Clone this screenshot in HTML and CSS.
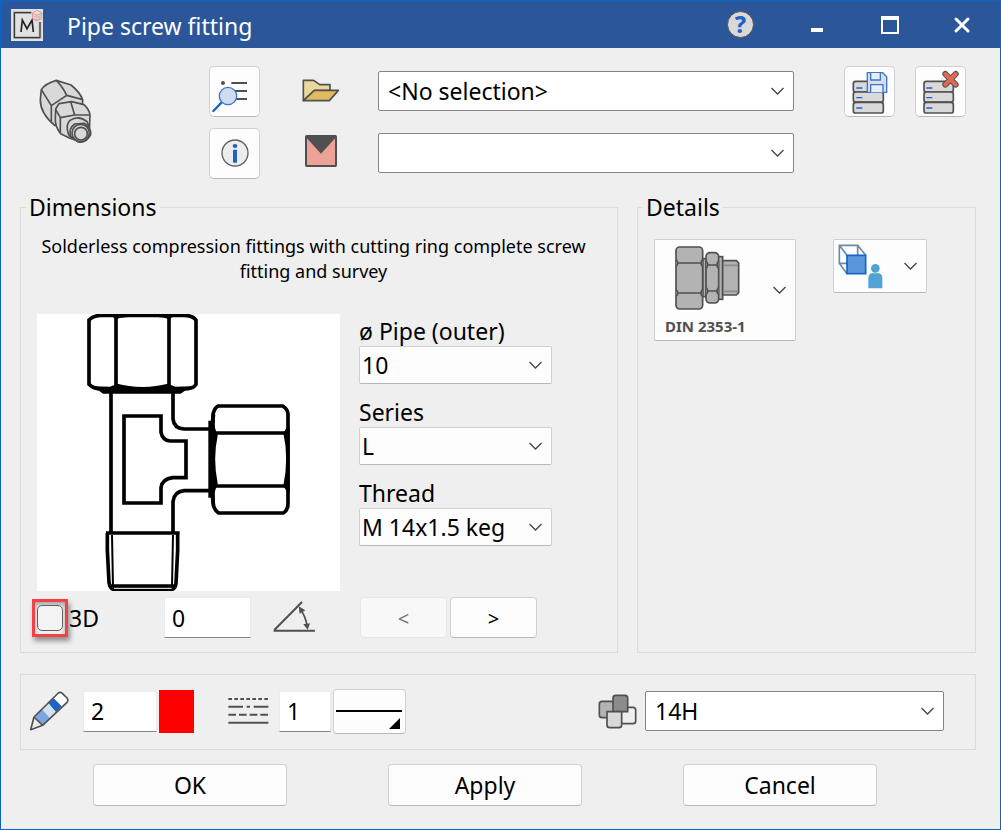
FILE: index.html
```html
<!DOCTYPE html>
<html lang="en">
<head>
    <meta charset="UTF-8">
    <meta name="viewport" content="width=device-width, initial-scale=1.0">
    <title>Pipe screw fitting</title>
    <link rel="stylesheet" href="styles.css">
</head>
<body>
    <div class="window">
        <header class="titlebar">
            <svg class="app-icon" width="32" height="32" viewBox="33 27 96 96">
                <rect x="33" y="27" width="96" height="96" fill="#e1e1e1"/>
                <path d="M94 38H43V113H120V66" fill="none" stroke="#b5b5b5" stroke-width="8"/>
                <path d="M94 38H43V113H120V66" fill="none" stroke="#222" stroke-width="3"/>
                <path d="M63 96L67 60L81 86L96 60L100 96" fill="none" stroke="#222" stroke-width="5"/>
                <path d="M97 39L111 31L125 38V56L111 63L98 57ZM98 40L111 46L125 39M101 48L111 52L122 47M101 56L111 59L122 53" fill="none" stroke="#e58b8b" stroke-width="2.5"/>
            </svg>
            <h1 class="title">Pipe screw fitting</h1>
            <div class="window-buttons">
                <button class="win-btn help" aria-label="Help">?</button>
                <button class="win-btn" aria-label="Minimize">
                    <svg width="20" height="20"><rect x="4" y="13" width="12" height="4" fill="#fff"/></svg>
                </button>
                <button class="win-btn" aria-label="Maximize">
                    <svg width="20" height="20"><path d="M2 3H18V18H2Z" fill="none" stroke="#fff" stroke-width="2"/><path d="M1 3H19" stroke="#fff" stroke-width="4"/></svg>
                </button>
                <button class="win-btn" aria-label="Close">
                    <svg width="20" height="20"><path d="M3 4L15 16M15 4L3 16" stroke="#fff" stroke-width="3" stroke-linecap="round"/></svg>
                </button>
            </div>
        </header>

        <main class="content">
            <section class="toolbar">
                <svg class="fitting-icon" width="54" height="65" viewBox="117 238 162 195" fill="#d9d9d9" stroke="#505050" stroke-width="5" stroke-linejoin="round">
                    <path d="M124 270Q135 252 169 242L213 256Q240 278 248 300L247 316L165 378Q120 340 121 300Z"/>
                    <path d="M124 270L154 318L200 287L246 299M169 242Q190 264 200 287M154 318V366" fill="none"/>
                    <path d="M167 328L177 312L215 306L252 315Q268 330 270 346L268 398L240 426L208 415L182 402Q164 380 166 355Z"/>
                    <path d="M167 330L181 354L224 346L268 346M212 306L224 346M181 354V400" fill="none"/>
                    <path d="M206 405Q195 375 210 362Q236 345 261 366L266 378L214 414Z"/>
                    <path d="M212 410Q205 386 224 373L252 371Q274 382 272 405Q260 430 235 427Z"/>
                    <circle cx="242" cy="400" r="26"/>
                    <circle cx="243" cy="402" r="19"/>
                </svg>
                <div class="tool-stack">
                    <button class="tool-btn" aria-label="Search list">
                        <svg width="45" height="43" viewBox="636 210 135 129">
                            <circle cx="669" cy="249" r="6" fill="#505050"/>
                            <path d="M694 249H741M694 273H741M694 297H741" stroke="#505050" stroke-width="6"/>
                            <path d="M665 307L640 333" stroke="#1f62c5" stroke-width="7" stroke-linecap="round"/>
                            <circle cx="684" cy="288" r="26" fill="#cfdcf0" stroke="#3b78cc" stroke-width="4"/>
                        </svg>
                    </button>
                    <button class="tool-btn" aria-label="Information">
                        <svg width="28" height="30" viewBox="658 415 84 90">
                            <circle cx="700" cy="457" r="39" fill="#ededed" stroke="#606060" stroke-width="4"/>
                            <ellipse cx="700" cy="436" rx="7" ry="6" fill="#1f62c5"/>
                            <rect x="694" y="447" width="12" height="39" rx="2" fill="#1f62c5"/>
                        </svg>
                    </button>
                </div>
                <div class="presets">
                    <label class="preset-icon" for="file" aria-label="File">
                        <svg width="38" height="24" viewBox="907 235 114 72" stroke="#505050" stroke-width="5" stroke-linejoin="round">
                            <path d="M911 299V239H942L960 252H991V270H944L913 299Z" fill="#ead79b"/>
                            <path d="M911 300L944 269H1016L989 300Z" fill="#dfbd5e"/>
                        </svg>
                    </label>
                    <select class="combo" id="file"><option>&lt;No selection&gt;</option></select>
                    <label class="preset-icon" for="favourite" aria-label="Favourite">
                        <svg width="32" height="36" viewBox="915 405 96 108">
                            <rect x="918" y="408" width="90" height="90" rx="2" fill="#eda298" stroke="#505050" stroke-width="6"/>
                            <path d="M918 407H1008V412L963 461L918 412Z" fill="#505050"/>
                        </svg>
                    </label>
                    <select class="combo" id="favourite"><option></option></select>
                </div>
                <div class="db-buttons">
                    <button class="tool-btn" aria-label="Save to database">
                        <svg width="36" height="44" viewBox="458 209 108 132" stroke-width="5">
                            <g fill="#d9d9d9" stroke="#505050">
                                <rect x="462" y="243" width="90" height="32" rx="7"/>
                                <rect x="462" y="275" width="90" height="30" rx="7"/>
                                <rect x="462" y="306" width="90" height="32" rx="7"/>
                            </g>
                            <path d="M471 263H489M471 292H489M471 323H489" stroke="#1f62c5" stroke-width="4"/>
                            <path d="M504 217H550L562 229V276H504Z" fill="#d9dde5" stroke="#3b78cc" stroke-width="4"/>
                            <path d="M514 218V239H543V218M514 276V253H551V276" fill="#e9edf4" stroke="#3b78cc" stroke-width="4"/>
                        </svg>
                    </button>
                    <button class="tool-btn" aria-label="Delete from database">
                        <svg width="36" height="44" viewBox="674 209 108 132" stroke-width="5">
                            <g fill="#d9d9d9" stroke="#505050">
                                <rect x="677" y="243" width="88" height="32" rx="7"/>
                                <rect x="677" y="275" width="88" height="30" rx="7"/>
                                <rect x="677" y="306" width="88" height="32" rx="7"/>
                            </g>
                            <path d="M684 263H702M684 292H702M684 323H702" stroke="#1f62c5" stroke-width="4"/>
                            <path d="M741 221L772 253M772 221L741 253" stroke="#505050" stroke-width="18" stroke-linecap="round"/>
                            <path d="M741 221L772 253M772 221L741 253" stroke="#e26a55" stroke-width="12" stroke-linecap="round"/>
                        </svg>
                    </button>
                </div>
            </section>

            <div class="groups">
                <fieldset class="group dimensions">
                    <legend>Dimensions</legend>
                    <p class="description">Solderless compression fittings with cutting ring complete screw fitting and survey</p>
                    <div class="dim-grid">
                        <svg class="drawing" width="303" height="277" viewBox="21 27 909 831" fill="none" stroke="#000" stroke-width="11">
                            <!-- top nut -->
                            <path d="M177 45Q190 31 215 31H460Q488 31 498 45V238Q490 252 460 252H215Q190 252 177 238Z"/>
                            <path d="M258 36V246M417 36V246"/>
                            <path d="M240 31H436L417 43Q400 35 338 33Q276 35 258 43Z" fill="#000" stroke="none"/>
                            <path d="M190 244L240 245L262 236Q295 245 338 246Q380 245 413 236L436 245L484 244L452 266H219Z" fill="#000" stroke="none"/>
                            <!-- body -->
                            <path d="M243 262V684M429 262V342Q432 370 462 372H540M429 684V590Q432 560 462 557H540"/>
                            <path d="M282 333H393V382Q398 406 420 408H468V518H428Q396 522 393 548V594H282Z"/>
                            <!-- side nut -->
                            <path d="M564 303H758Q774 312 774 330V598Q774 615 760 624H566Q549 612 549 590V335Q549 313 564 303Z"/>
                            <path d="M555 384H768M555 543H768"/>
                            <path d="M535 347H542L546 318L556 330L552 360L563 392Q548 460 563 535L552 567L556 600L546 605L542 578H535Z" fill="#000" stroke="none"/>
                            <path d="M779 365H772L760 384Q777 460 760 543L772 562H779Z" fill="#000" stroke="none"/>
                            <!-- thread -->
                            <path d="M228 684H449M232 684V735L237 832Q240 854 255 854H420Q436 854 438 835L443 735V684M238 843H438"/>
                            <path d="M246 690L249 845M429 690L426 845" stroke-width="6"/>
                            <path d="M252 850H425" stroke="#fff" stroke-width="3"/>
                        </svg>
                        <div class="fields">
                            <label for="pipe">ø Pipe (outer)</label>
                            <select id="pipe"><option>10</option></select>
                            <label for="series">Series</label>
                            <select id="series"><option>L</option></select>
                            <label for="thread">Thread</label>
                            <select id="thread"><option>M 14x1.5 keg</option></select>
                        </div>
                        <div class="options">
                            <label class="check-3d"><span class="highlight"><input type="checkbox"></span>3D</label>
                            <input class="text-box angle" type="text" value="0" aria-label="Angle">
                            <svg width="43" height="33" viewBox="729 892 129 99" fill="none" stroke="#505050" stroke-width="5">
                                <path d="M816 895L733 979M731 981H855" stroke-width="6"/>
                                <path d="M813 920Q826 938 831 965"/>
                                <path d="M806 908L826 920L809 930ZM820 962L840 959L833 978Z" fill="#505050" stroke="none"/>
                            </svg>
                        </div>
                        <div class="pager">
                            <button class="push" disabled>&lt;</button>
                            <button class="push">&gt;</button>
                        </div>
                    </div>
                </fieldset>

                <fieldset class="group details">
                    <legend>Details</legend>
                    <div class="detail-row">
                        <button class="drop-btn standard" aria-haspopup="true">
                            <span class="standard-face">
                                <svg width="66" height="66" viewBox="104 150 198 198" fill="#b3b3b3" stroke="#505050" stroke-width="5">
                                    <rect x="187" y="191" width="11" height="114"/>
                                    <rect x="233" y="185" width="14" height="128"/>
                                    <path d="M247 197H288L295 204V293L288 300H247Z"/>
                                    <path d="M250 211H293M250 289H293" stroke="#8c8c8c"/>
                                    <rect x="107" y="156" width="80" height="186" rx="11"/>
                                    <path d="M112 204H182M112 294H182M108 194Q116 204 108 214M186 194Q178 204 186 214M108 284Q116 294 108 304M186 284Q178 294 186 304"/>
                                    <rect x="197" y="173" width="38" height="151" rx="12"/>
                                    <path d="M202 210H230M202 288H230M198 199Q206 210 198 220M234 199Q226 210 234 220M198 278Q206 288 198 298M234 278Q226 288 234 298"/>
                                </svg>
                                <span class="standard-name">DIN 2353-1</span>
                            </span>
                            <svg class="chevron" width="13" height="8"><path d="M0.5 1L6.5 7L12.5 1" fill="none" stroke="#444" stroke-width="1.3"/></svg>
                        </button>
                        <button class="drop-btn view" aria-label="View" aria-haspopup="true">
                            <svg width="45" height="45" viewBox="593 146 135 135">
                                <path d="M597 150H652V204H597ZM597 150L620 180M652 150L676 180M597 204L620 235M652 204L676 235" fill="none" stroke="#6a8ba5" stroke-width="5"/>
                                <rect x="620" y="180" width="56" height="55" fill="#5a96da" stroke="#1664c8" stroke-width="5"/>
                                <path d="M684 279V248Q684 234 697 233H713Q726 234 726 248V279Z" fill="#4fa3d5"/>
                                <circle cx="705" cy="219" r="13" fill="#4fa3d5"/>
                                <path d="M699 234H711" stroke="#b8d96a" stroke-width="2"/>
                            </svg>
                            <svg class="chevron" width="13" height="8"><path d="M0.5 1L6.5 7L12.5 1" fill="none" stroke="#444" stroke-width="1.3"/></svg>
                        </button>
                    </div>
                </fieldset>
            </div>

            <section class="attributes">
                <svg width="41" height="41" viewBox="28 67 123 123" stroke-linejoin="round">
                    <path d="M43 145L116 73Q122 69 128 74L142 88Q147 94 142 101L69 170Z" fill="#fff"/>
                    <path d="M86 104L102 89L126 113L109 131Z" fill="#1f62c5"/>
                    <path d="M67 122L86 104L109 131L91 149Z" fill="#d3e1f5"/>
                    <path d="M46 144L67 122L91 149L70 169Z" fill="#7ba5e0"/>
                    <path d="M43 145L33 183L69 170ZM43 145L116 73Q122 69 128 74L142 88Q147 94 142 101L69 170" fill="none" stroke="#505050" stroke-width="5"/>
                </svg>
                <input class="text-box pen" type="text" value="2" aria-label="Pen">
                <button class="colour" aria-label="Colour"></button>
                <svg class="line-icon" width="41" height="28" viewBox="626 91 123 84" stroke="#505050" stroke-width="6">
                    <path d="M627 97H747" stroke-dasharray="11 7"/>
                    <path d="M627 120H671M682 120H692M703 120H747"/>
                    <path d="M627 144H747" stroke-dasharray="23 9"/>
                    <path d="M627 168H747"/>
                </svg>
                <input class="text-box line-no" type="text" value="1" aria-label="Line type">
                <button class="line-btn" aria-label="Choose line type">
                    <svg width="66" height="38"><path d="M0 18H66" stroke="#000" stroke-width="2"/><path d="M64 25V36H53Z"/></svg>
                </button>
                <label class="layer-icon" for="layer" aria-label="Layer">
                    <svg width="39" height="35" viewBox="53 43 117 105" stroke="#505050" stroke-width="5">
                        <rect x="57" y="65" width="45" height="49" rx="8" fill="#b3b3b3"/>
                        <rect x="121" y="83" width="45" height="49" rx="8" fill="#efefef"/>
                        <path d="M98 96V55Q98 47 106 47H134Q142 47 142 55V96Z" fill="#8c8c8c"/>
                        <path d="M80 96H124V136Q124 144 116 144H88Q80 144 80 136Z" fill="#d9d9d9"/>
                    </svg>
                </label>
                <select class="combo layer" id="layer"><option>14H</option></select>
            </section>

            <footer class="actions">
                <button class="push">OK</button>
                <button class="push">Apply</button>
                <button class="push">Cancel</button>
            </footer>
        </main>
    </div>
</body>
</html>
```
FILE: styles.css
```css
* {
    box-sizing: border-box;
}
body {
    margin: 0;
    background: #efefef;
    color: #000;
    font-family: "Noto Sans", "Segoe UI", sans-serif;
    font-size: 23px;
}
button, input, select {
    margin: 0;
    padding: 0;
    font: inherit;
    color: inherit;
}
svg {
    display: block;
    flex: none;
}
.window {
    min-height: 100vh;
    border: 1px solid #0a63c9;
}
.titlebar {
    display: flex;
    align-items: center;
    height: 47px;
    padding: 0 27px 0 10px;
    background: #2b579a;
    color: #fff;
}
.title {
    flex: 1;
    margin: 0 0 0 24px;
    padding-top: 2px;
    font-size: 23px;
    font-weight: 400;
}
.window-buttons {
    display: flex;
    align-items: center;
    gap: 53px;
}
.win-btn {
    border: none;
    background: none;
}
.help {
    width: 27px;
    height: 27px;
    border: 1px solid #505050;
    border-radius: 50%;
    background: #d9d9d9;
    color: #1f62c5;
    font-weight: 800;
    line-height: 25px;
}
.content {
    padding: 18px 24px 0 19px;
}

/* toolbar */
.toolbar {
    display: flex;
    padding-right: 10px;
}
.fitting-icon {
    margin: 13px 116px 0 19px;
}
.tool-stack {
    display: grid;
    gap: 11px;
    align-content: start;
}
.tool-btn {
    display: flex;
    align-items: center;
    justify-content: center;
    width: 51px;
    height: 51px;
    background: #fdfdfd;
    border: 1px solid #d0d0d0;
    border-bottom-color: #b8b8b8;
    border-radius: 5px;
}
.presets {
    flex: 1;
    display: grid;
    grid-template-columns: 38px 1fr;
    gap: 22px 38px;
    align-items: center;
    align-content: start;
    margin: 5px 50px 0 42px;
}
.preset-icon {
    display: flex;
    justify-content: center;
}
.db-buttons {
    display: flex;
    gap: 20px;
}

/* drop-downs */
select {
    appearance: none;
    width: 100%;
    height: 38px;
    padding: 0 32px 0 2px;
    background: #fdfdfd url("data:image/svg+xml,%3Csvg xmlns='http://www.w3.org/2000/svg' width='13' height='8'%3E%3Cpath d='M.5 1L6.5 7L12.5 1' fill='none' stroke='%23444' stroke-width='1.3'/%3E%3C/svg%3E") no-repeat right 9px center;
    border: 1px solid #d0d0d0;
    border-bottom-color: #b8b8b8;
    border-radius: 2px;
}
.combo {
    height: 40px;
    padding-left: 9px;
    background-color: #fff;
    border-color: #858585;
}

/* groups */
.groups {
    display: grid;
    grid-template-columns: 598px 1fr;
    gap: 19px;
    margin-top: 12px;
}
.group {
    min-width: 0;
    margin: 0;
    padding: 11px 16px 14px;
    border: 1px solid #dcdcdc;
}
.group legend {
    margin-left: -11px;
    padding: 0 3px;
    line-height: 32px;
}
.description {
    margin: 0 -5px 0 -16px;
    font-size: 18px;
    line-height: 25px;
    text-align: center;
}
.dim-grid {
    display: grid;
    grid-template-columns: 303px 193px;
    gap: 6px 19px;
    margin-top: 30px;
}
.drawing {
    background: #fff;
}
.fields {
    display: grid;
    grid-template-rows: 32px 38px 43px 38px 43px 38px;
}
.fields label {
    line-height: 30px;
    align-self: end;
}
.options {
    display: flex;
    align-items: center;
    height: 41px;
    margin-left: -5px;
}
.check-3d {
    display: flex;
    align-items: center;
    gap: 1px;
    width: 132px;
}
.highlight {
    display: flex;
    padding: 3px 2px;
    border: 3px solid #f04343;
    box-shadow: 2px 4px 5px rgba(0, 0, 0, 0.4), inset 0 3px 4px rgba(0, 0, 0, 0.3);
}
.highlight input {
    appearance: none;
    width: 26px;
    height: 26px;
    background: #f3f3f3;
    border: 1px solid #606060;
    border-radius: 5px;
}
.text-box {
    height: 41px;
    padding-left: 7px;
    background: #fff;
    border: 1px solid #ebebeb;
    border-bottom-color: #858585;
}
.angle {
    width: 87px;
    margin-right: 22px;
}
.pager {
    display: flex;
    gap: 3px;
    height: 41px;
    padding-left: 1px;
}
.push {
    height: 42px;
    background: #fdfdfd;
    border: 1px solid #d0d0d0;
    border-bottom-color: #b8b8b8;
    border-radius: 4px;
}
.push:hover {
    background: #f5f9fd;
}
.push:disabled {
    background: #f8f8f8;
    border-color: #e6e6e6;
    color: #777;
}
.pager .push {
    width: 87px;
    height: 41px;
    padding-top: 3px;
    font-size: 20px;
    line-height: 30px;
}

/* details */
.detail-row {
    display: flex;
    align-items: flex-start;
    gap: 37px;
    padding-top: 5px;
}
.drop-btn {
    display: flex;
    background: #fdfdfd;
    border: 1px solid #d0d0d0;
    border-bottom-color: #b8b8b8;
    border-radius: 2px;
}
.drop-btn .chevron {
    align-self: center;
    margin-left: auto;
}
.standard {
    width: 142px;
    height: 102px;
    padding: 5px 9px 5px 10px;
}
.standard-face {
    display: grid;
    justify-items: center;
}
.standard-face svg {
    margin-left: 5px;
}
.standard-name {
    color: #505050;
    font-size: 15px;
    font-weight: 700;
    line-height: 30px;
}
.view {
    width: 94px;
    height: 54px;
    padding: 4px 9px 4px 4px;
}

/* pen, line and layer row */
.attributes {
    display: flex;
    align-items: center;
    height: 76px;
    margin-top: 21px;
    padding: 0 31px 2px 8px;
    border: 1px solid #dcdcdc;
}
.pen {
    width: 74px;
    margin: 0 2px 0 13px;
}
.colour {
    width: 35px;
    height: 43px;
    background: #f00;
    border: none;
}
.line-icon {
    margin: 0 10px 0 34px;
}
.line-no {
    width: 52px;
    margin-right: 2px;
}
.line-btn {
    width: 73px;
    height: 45px;
    padding: 3px 2px;
    background: #fdfdfd;
    border: 1px solid #d0d0d0;
    border-bottom-color: #b8b8b8;
    border-radius: 4px;
}
.layer-icon {
    margin: 0 8px 0 auto;
}
.layer {
    width: 299px;
}

.actions {
    display: flex;
    justify-content: center;
    gap: 101px;
    padding: 14px 26px 22px 0;
}
.actions .push {
    width: 194px;
}
```
